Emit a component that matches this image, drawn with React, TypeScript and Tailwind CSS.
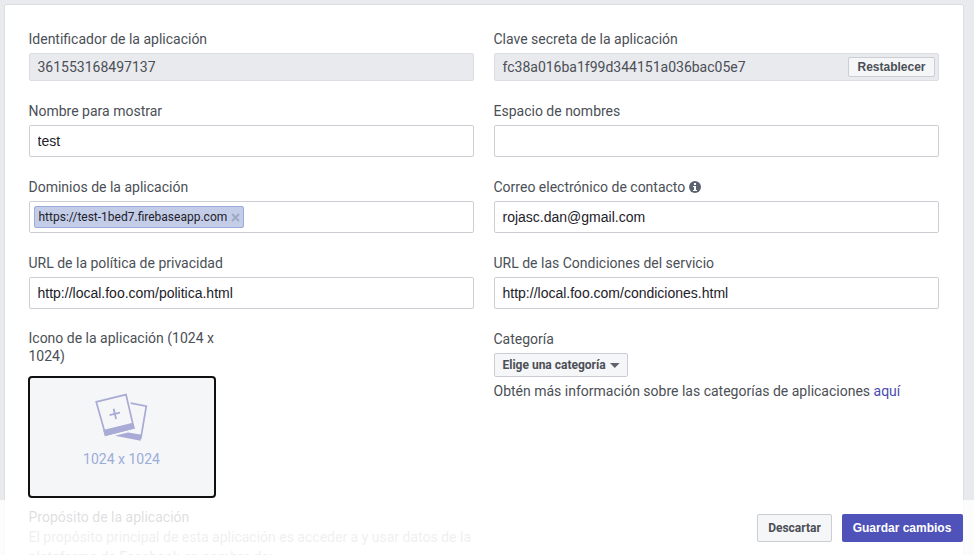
import type { ReactNode } from 'react';

function Field({ label, children }: { label: ReactNode; children: ReactNode }) {
  return (
    <div className="flex w-[445px] flex-col">
      <div className="mb-[5px] flex h-[18px] items-center leading-[18px]">{label}</div>
      {children}
    </div>
  );
}

function Input({ value }: { value: string }) {
  return (
    <input
      className="h-8 w-full rounded-[2px] border border-[#ccced4] bg-white px-2 font-['Liberation_Sans',Arial,sans-serif] text-[14px] text-[#1d2129] outline-none"
      defaultValue={value}
    />
  );
}

function ReadOnly({ value, action }: { value: string; action?: ReactNode }) {
  return (
    <div className="flex h-7 items-center justify-between rounded-[2px] border border-[#dadde1] bg-[#e9eaee] pr-[3px] pl-2">
      <span>{value}</span>
      {action}
    </div>
  );
}

function PhotosIcon() {
  return (
    <svg width="54" height="49" viewBox="0 0 54 49" fill="none">
      <path d="M35.7 10.2 51.3 13.2 45.8 45.5" stroke="#a9abd6" strokeWidth="1.7" />
      <path d="M19.8 42.8 33 39.4 46.8 41.8 45.6 47.8Z" fill="#a9abd6" />
      <path d="M1.2 8.8 31 1.6 38.8 35 10.6 42Z" fill="#f5f6f7" stroke="#a9abd6" strokeWidth="1.7" />
      <path d="M8.2 36.9 37.8 29.8 39.8 35.5 9.8 43.2Z" fill="#a9abd6" />
      <path d="m14.6 22.1 10.4-2.4m-6.4-3.9 2.5 10.2" stroke="#a9abd6" strokeWidth="1.8" />
    </svg>
  );
}

export default function App() {
  return (
    <div className="relative h-[555px] w-[974px] overflow-hidden bg-[#e9eaee] pt-1 pl-1 font-[Roboto,sans-serif] text-[14px] leading-[18px] text-[#4b4f56]">
      <main className="h-[620px] w-[960px] rounded-[2px] border border-[#dadde1] bg-white pt-[25px] pl-[23.5px]">
        <div className="grid grid-cols-[445px_445px] gap-x-5 gap-y-[21px]">
          <Field label="Identificador de la aplicación">
            <ReadOnly value="361553168497137" />
          </Field>
          <Field label="Clave secreta de la aplicación">
            <ReadOnly
              value="fc38a016ba1f99d344151a036bac05e7"
              action={
                <button className="h-5 w-[87px] rounded-[2px] border border-[#ccced4] bg-[#f5f6f7] pl-px font-['Liberation_Sans',Arial,sans-serif] text-[12px] leading-[18px] font-bold">
                  Restablecer
                </button>
              }
            />
          </Field>
          <Field label="Nombre para mostrar">
            <Input value="test" />
          </Field>
          <Field label="Espacio de nombres">
            <Input value="" />
          </Field>
          <Field label="Dominios de la aplicación">
            <div className="flex h-8 items-center rounded-[2px] border border-[#ccced4] pl-1">
              <span className="flex h-[22px] w-[210px] items-center rounded-[2px] border border-[#9cabdb] bg-[#c4cde8] pl-1 text-[12px] whitespace-nowrap text-[#1d2129]">
                https://test-1bed7.firebaseapp.com
                <svg className="ml-1" width="9" height="9" viewBox="0 0 9 9" stroke="#a0a8c3" strokeWidth="2">
                  <path d="m1 1 7 7M8 1 1 8" />
                </svg>
              </span>
            </div>
          </Field>
          <Field
            label={
              <>
                Correo electrónico de contacto
                <svg className="ml-1" width="12" height="12" viewBox="0 0 12 12">
                  <circle cx="6" cy="6" r="6" fill="#5c6270" />
                  <path d="M5 2h2v2H5zM4 5h3v4h1v1H4V9h1V6H4z" fill="white" />
                </svg>
              </>
            }
          >
            <Input value="rojasc.dan@gmail.com" />
          </Field>
          <Field label="URL de la política de privacidad">
            <Input value="http://local.foo.com/politica.html" />
          </Field>
          <Field label="URL de las Condiciones del servicio">
            <Input value="http://local.foo.com/condiciones.html" />
          </Field>
          <div className="-mt-px">
            <div className="w-[190px]">Icono de la aplicación (1024 x 1024)</div>
            <div className="mt-[11px] -ml-[0.5px] flex h-[122px] w-[188px] flex-col items-center rounded-[4px] border-2 border-[#101010] bg-[#f5f6f7] pt-[15px]">
              <PhotosIcon />
              <div className="mt-2 pr-px text-[#9daddb]">1024 x 1024</div>
            </div>
            <div className="mt-[10px] leading-[18px] text-[#1d2129]">Propósito de la aplicación</div>
            <div className="mt-px w-[446px] leading-5 text-[#90949c]">
              El propósito principal de esta aplicación es acceder a y usar datos de la plataforma de Facebook en nombre de:
            </div>
          </div>
          <div>
            <div>Categoría</div>
            <button className="mt-[5px] flex h-6 w-[134px] items-center rounded-[2px] border border-[#ccced4] bg-[#f5f6f7] pl-2 text-[12px] font-bold whitespace-nowrap">
              Elige una categoría
              <svg className="ml-1" width="10" height="5" viewBox="0 0 10 5">
                <path d="M0 0h9.6L4.8 5z" fill="#5c6270" />
              </svg>
            </button>
            <div className="mt-[5px]">
              Obtén más información sobre las categorías de aplicaciones <a className="text-[#4b4bb0]">aquí</a>
            </div>
          </div>
        </div>
      </main>
      <footer className="absolute inset-x-0 bottom-0 flex h-[55px] items-start justify-end gap-[10px] bg-white/85 pt-[14px] pr-[11px] font-['Liberation_Sans',Arial,sans-serif] text-[12px] font-bold">
        <button className="h-7 w-[75px] rounded-[2px] border border-[#ccced4] bg-[#f5f6f7] font-[Roboto,sans-serif]">Descartar</button>
        <button className="h-7 w-[121px] rounded-[2px] bg-[#4f52b8] pr-px text-white">Guardar cambios</button>
      </footer>
    </div>
  );
}
